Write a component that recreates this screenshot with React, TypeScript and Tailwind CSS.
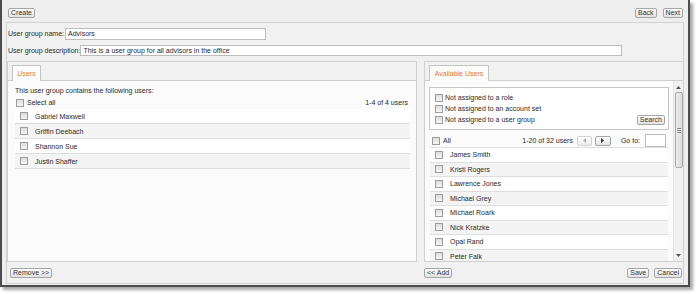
import React from "react";

const font = { fontFamily: '"Liberation Sans", Arial, sans-serif' };

function Check() {
  return (
    <span className="inline-block w-[8px] h-[8px] shrink-0 border border-[#9c9c9c] bg-linear-to-b from-[#dcdcdc] to-[#f7f7f7]" />
  );
}

function Btn({ label, className = "" }: { label: string; className?: string }) {
  return (
    <button
      className={`h-[10px] px-[2px] text-[7px] leading-[8px] text-[#333] border border-[#a6a6a6] rounded-[2px] bg-linear-to-b from-[#fdfdfd] to-[#e2e2e2] ${className}`}
    >
      {label}
    </button>
  );
}

function Tab({ label, width }: { label: string; width: string }) {
  return (
    <div className="h-[19px] shrink-0 flex items-end border-b border-[#cfcfcf] pl-[4px]">
      <div
        className={`${width} h-[16px] -mb-px border border-b-0 border-[#c4c4c4] bg-[#fcfcfc] text-[#e4772f] text-[7px] flex items-center justify-center`}
      >
        {label}
      </div>
    </div>
  );
}

const currentUsers = ["Gabriel Maxwell", "Griffin Deebach", "Shannon Sue", "Justin Shaffer"];
const availableUsers = [
  "James Smith",
  "Kristi Rogers",
  "Lawrence Jones",
  "Michael Grey",
  "Michael Roark",
  "Nick Kratzke",
  "Opal Rand",
  "Peter Falk",
];

function UserRow({ name, odd, h }: { name: string; odd: boolean; h: string }) {
  return (
    <div
      className={`${h} shrink-0 flex items-center gap-[7px] pl-[5px] border-b border-[#dedede] ${odd ? "bg-[#f4f4f4]" : "bg-white"}`}
    >
      <Check />
      <span className="text-[7px] leading-[9px] text-[#2a2a2a]">{name}</span>
    </div>
  );
}

export default function App() {
  return (
    <div className="w-[700px] h-[294px] bg-white overflow-hidden text-[#2a2a2a] leading-[10px]" style={font}>
      <div className="w-[690px] h-[287px] bg-[#eeeeee] border-l-2 border-r-2 border-b-2 border-[#4c4c4c] shadow-[3px_3px_3px_rgba(0,0,0,0.35)] flex flex-col">
        {/* toolbar */}
        <div className="h-[22px] shrink-0 flex justify-between items-start pt-[8px] pl-[6px] pr-[5px]">
          <Btn label="Create" />
          <div className="flex gap-[6px]">
            <Btn label="Back" />
            <Btn label="Next" />
          </div>
        </div>

        {/* main panel */}
        <div className="ml-[4px] w-[678px] h-[262px] border border-[#d2d2d2] bg-[#f1f1f1] flex flex-col">
          <div className="mt-[5px] h-[12px] flex items-center gap-[1px] pl-[1px]">
            <span className="text-[7px]">User group name:</span>
            <div className="w-[201px] h-[12px] border border-[#bcbcbc] bg-white text-[7px] leading-[10px] pl-[2px]">
              Advisors
            </div>
          </div>
          <div className="mt-[5px] h-[11px] flex items-center pl-[1px]">
            <span className="text-[7px]">User group description:</span>
            <div className="w-[542px] h-[11px] border border-[#bcbcbc] bg-white text-[7px] leading-[9px] pl-[2px]">
              This is a user group for all advisors in the office
            </div>
          </div>

          {/* panes */}
          <div className="mt-[5px] h-[201px] shrink-0 flex gap-[7px]">
            {/* left pane */}
            <div className="w-[410px] border border-[#d0d0d0] flex flex-col">
              <Tab label="Users" width="w-[29px]" />
              <div className="flex-1 bg-[#fbfbfb] flex flex-col">
                <div className="mt-[5px] pl-[7px] h-[10px] text-[7px] leading-[10px]">
                  This user group contains the following users:
                </div>
                <div className="mt-[2px] h-[10px] flex items-center pl-[8px] pr-[8px]">
                  <Check />
                  <span className="ml-[3px] text-[7px]">Select all</span>
                  <span className="ml-auto text-[7px]">1-4 of 4 users</span>
                </div>
                <div className="mt-[1px] ml-[7px] w-[395px] flex flex-col">
                  {currentUsers.map((n, i) => (
                    <UserRow key={n} name={n} odd={i % 2 === 1} h="h-[15px]" />
                  ))}
                </div>
              </div>
            </div>

            {/* right pane */}
            <div className="w-[259px] border border-[#d0d0d0] border-r-0 flex flex-col">
              <Tab label="Available Users" width="w-[60px]" />
              <div className="flex-1 bg-[#fbfbfb] flex overflow-hidden">
                <div className="w-[248px] flex flex-col">
                  {/* filters */}
                  <div className="mt-[6px] ml-[4px] w-[240px] h-[43px] shrink-0 border border-[#c6c6c6] bg-white flex justify-between items-end pb-[4px] pr-[3px]">
                    <div className="self-start pt-[4px] pl-[5px] flex flex-col">
                      {["Not assigned to a role", "Not assigned to an account set", "Not assigned to a user group"].map((t) => (
                        <div key={t} className="h-[11px] flex items-center gap-[2px]">
                          <Check />
                          <span className="text-[7px]">{t}</span>
                        </div>
                      ))}
                    </div>
                    <Btn label="Search" />
                  </div>
                  {/* pager */}
                  <div className="mt-[4px] h-[13px] shrink-0 flex items-center pl-[7px] pr-[7px]">
                    <Check />
                    <span className="ml-[3px] text-[7px] mt-[1px]">All</span>
                    <span className="ml-auto text-[7px]">1-20 of 32 users</span>
                    <button className="ml-[4px] w-[15px] h-[10px] border border-[#d2d2d2] rounded-[2px] bg-linear-to-b from-[#fdfdfd] to-[#ececec] flex items-center justify-center">
                      <svg width="3" height="5" viewBox="0 0 3 5"><path d="M3 0 L0 2.5 L3 5 Z" fill="#b0b0b0" /></svg>
                    </button>
                    <button className="ml-[3px] w-[16px] h-[10px] border border-[#a6a6a6] rounded-[2px] bg-linear-to-b from-[#fdfdfd] to-[#e2e2e2] flex items-center justify-center">
                      <svg width="3" height="5" viewBox="0 0 3 5"><path d="M0 0 L3 2.5 L0 5 Z" fill="#333" /></svg>
                    </button>
                    <span className="ml-[10px] text-[7px]">Go to:</span>
                    <div className="ml-[5px] w-[21px] h-[13px] border border-[#bcbcbc] bg-white" />
                  </div>
                  {/* list */}
                  <div className="ml-[5px] w-[238px] flex flex-col border-t border-[#dedede]">
                    {availableUsers.map((n, i) => (
                      <UserRow key={n} name={n} odd={i % 2 === 1} h="h-[14.5px]" />
                    ))}
                  </div>
                </div>
                {/* scrollbar */}
                <div className="w-[10px] ml-auto bg-[#f0f0f0] border-l border-[#e2e2e2] flex flex-col items-center">
                  <svg className="mt-[5px]" width="5" height="3" viewBox="0 0 5 3"><path d="M0 3 L2.5 0 L5 3 Z" fill="#555" /></svg>
                  <div className="mt-[3px] w-[8px] h-[76px] border border-[#a9a9a9] rounded-[2px] bg-linear-to-r from-[#eeeeee] to-[#dadada] flex flex-col items-center justify-center gap-[1px]">
                    <span className="w-[4px] h-px bg-[#8a8a8a]" />
                    <span className="w-[4px] h-px bg-[#8a8a8a]" />
                    <span className="w-[4px] h-px bg-[#8a8a8a]" />
                  </div>
                  <svg className="mt-auto mb-[4px]" width="5" height="3" viewBox="0 0 5 3"><path d="M0 0 L2.5 3 L5 0 Z" fill="#555" /></svg>
                </div>
              </div>
            </div>
          </div>

          {/* footer */}
          <div className="mt-[6px] flex items-start gap-[7px]">
            <div className="w-[410px] pl-[3px] flex items-start">
              <Btn label="Remove >>" />
            </div>
            <div className="w-[259px] flex items-start pr-[1px]">
              <Btn label="<< Add" />
              <Btn label="Save" className="ml-auto" />
              <Btn label="Cancel" className="ml-[5px]" />
            </div>
          </div>
        </div>
      </div>
    </div>
  );
}
